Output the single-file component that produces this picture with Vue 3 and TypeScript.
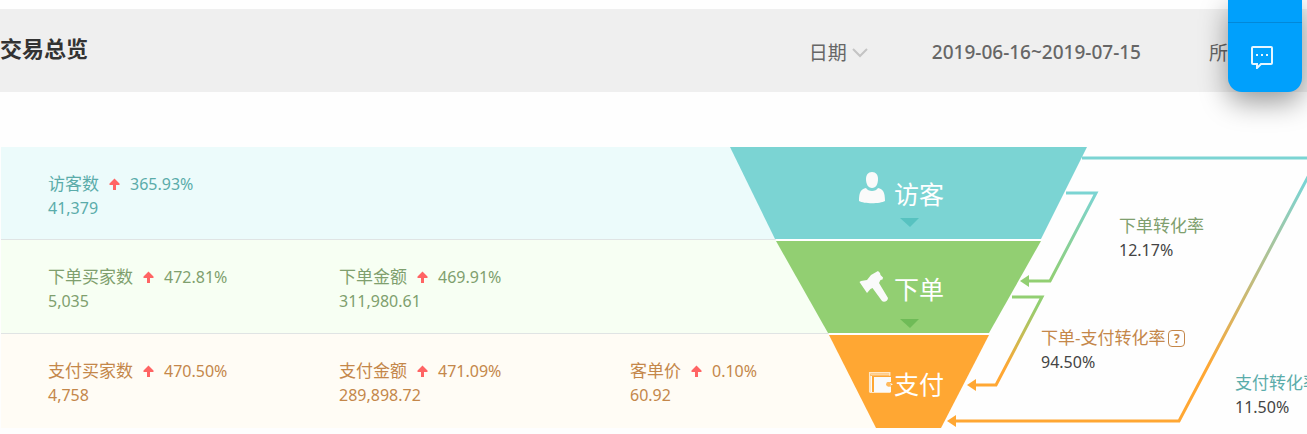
<script setup lang="ts">
interface Metric { name: string; change: string; value: string }
interface Stage { key: string; metrics: Metric[] }
interface Rate { key: string; name: string; value: string; help?: boolean }

const stages: Stage[] = [
  { key: 'visit', metrics: [{ name: '访客数', change: '365.93%', value: '41,379' }] },
  {
    key: 'order',
    metrics: [
      { name: '下单买家数', change: '472.81%', value: '5,035' },
      { name: '下单金额', change: '469.91%', value: '311,980.61' },
    ],
  },
  {
    key: 'pay',
    metrics: [
      { name: '支付买家数', change: '470.50%', value: '4,758' },
      { name: '支付金额', change: '471.09%', value: '289,898.72' },
      { name: '客单价', change: '0.10%', value: '60.92' },
    ],
  },
]

const rates: Rate[] = [
  { key: 'order', name: '下单转化率', value: '12.17%' },
  { key: 'order-pay', name: '下单-支付转化率', value: '94.50%', help: true },
  { key: 'pay', name: '支付转化率', value: '11.50%' },
]
</script>

<template>
  <main class="page">
    <header class="bar">
      <h1>交易总览</h1>
      <div class="filters">
        <button type="button" class="picker">
          日期
          <svg width="16" height="10" viewBox="0 0 16 10" aria-hidden="true">
            <path d="M1 1l7 7 7-7" fill="none" stroke="#c4c4c4" stroke-width="2" />
          </svg>
        </button>
        <span class="range">2019-06-16~2019-07-15</span>
        <button type="button" class="picker">所</button>
      </div>
    </header>

    <section class="overview">
      <div class="stages">
        <div v-for="s in stages" :key="s.key" class="stage" :class="s.key">
          <dl v-for="m in s.metrics" :key="m.name" class="metric">
            <dt>
              {{ m.name }}
              <svg width="11" height="12" viewBox="0 0 11 12" role="img" aria-label="上升">
                <path d="M5.500 .5L10.500 5.500V7H7v5H4V7H.5V5.500z" fill="#ff6464" />
              </svg>
              <span class="num">{{ m.change }}</span>
            </dt>
            <dd class="num">{{ m.value }}</dd>
          </dl>
        </div>
      </div>

      <div class="diagram">
        <svg class="funnel" width="600" height="281" viewBox="0 0 600 281">
          <defs>
            <linearGradient id="g1" gradientUnits="userSpaceOnUse" x1="0" y1="46" x2="0" y2="134">
              <stop offset="0" stop-color="#7bd4d3" /><stop offset="1" stop-color="#92cf72" />
            </linearGradient>
            <linearGradient id="g2" gradientUnits="userSpaceOnUse" x1="0" y1="150" x2="0" y2="238">
              <stop offset="0.1" stop-color="#92cf72" /><stop offset="0.8" stop-color="#ffa733" />
            </linearGradient>
            <linearGradient id="g3" gradientUnits="userSpaceOnUse" x1="0" y1="11" x2="0" y2="274">
              <stop offset="0.1" stop-color="#7bd4d3" /><stop offset="0.8" stop-color="#ffa733" />
            </linearGradient>
          </defs>
          <path d="M45 91h267l-1 4H47zM98 185h162l-1 4H100z" fill="#fff" />
          <path d="M0 0H357L311 92H45z" fill="#7bd4d3" />
          <path d="M46 94H311L259 186H98z" fill="#92cf72" />
          <path d="M99 188H259L211 281H146z" fill="#ffa733" />
          <path d="M170 71h19l-9 9z" fill="#57c2c0" />
          <path d="M170 172h19l-9 9z" fill="#6fbb57" />

          <g fill="none" stroke-width="3">
            <path d="M336 46H366L320 134H298" stroke="url(#g1)" />
            <path d="M282 150H312L266 238H245" stroke="url(#g2)" />
            <path d="M352 11H588L449 274H224" stroke="url(#g3)" />
          </g>
          <path d="M290 134l9-6v12z" fill="#92cf72" />
          <path d="M237 238l9-6v12z" fill="#ffa733" />
          <path d="M217 274l9-6v12z" fill="#ffa733" />

          <g fill="#fafafa">
            <path d="M142 25c4 0 6 3 6 7 0 5-2 9-6 9s-6-4-6-9c0-4 2-7 6-7z" />
            <path d="M136 41c2 4 10 4 12 0 5 1 7 4 7 13-5 3-21 3-26 0 0-9 2-12 7-13z" />
            <path d="M129.500 135L131 134l6-1 4-5 7-4 2 2 .5 2 2.500 2.500-.5 2-2 .5-1.500 3 9 15c0 3-4 5-6 3L142.500 141l-2 1-3.500 4z" />
            <path d="M144 230h17v5h-2a2.300 2.300 0 0 0 0 4.600h2V245h-17z" />
            <path d="M159 235.500l4 1.800-4 2z" />
          </g>
          <path d="M139.700 245V225.700h20v3" fill="none" stroke="#ffe6c4" stroke-width="1.500" />
          <path d="M139.500 245.500h21" stroke="#ffe6c4" />
          <path d="M141 227.500h18" stroke="#ffd39a" stroke-width="2" />
          <path d="M141.200 229v16" stroke="#fafafa" stroke-width="1.600" />
          <circle cx="158.400" cy="237.300" r="2.300" fill="#ffb95c" />
          <g class="names">
            <text x="164" y="57">访客</text>
            <text x="164" y="152">下单</text>
            <text x="164" y="247">支付</text>
          </g>
        </svg>

        <dl v-for="r in rates" :key="r.key" class="rate" :class="r.key">
          <dt>{{ r.name }}<button v-if="r.help" type="button" class="help" aria-label="说明">?</button></dt>
          <dd class="num">{{ r.value }}</dd>
        </dl>
      </div>
    </section>

    <aside class="dock">
      <button type="button" class="dock-item" aria-label="更多"></button>
      <button type="button" class="dock-item chat" aria-label="客服">
        <svg width="24" height="24" viewBox="0 0 24 24" aria-hidden="true">
          <path d="M3 2h18q1 0 1 1v15q0 1-1 1H11l-4 4v-4H3q-1 0-1-1V3q0-1 1-1z" fill="none" stroke="#e6f6ff" stroke-width="2" />
          <path d="M6 9h2v2H6zM11 9h2v2h-2zM16 9h2v2h-2z" fill="#e6f6ff" />
        </svg>
      </button>
    </aside>
  </main>
</template>

<style>
body { margin: 0; background: #fefefe; }
</style>

<style scoped>
.page {
  position: relative;
  overflow: hidden;
  padding: 9px 0 6px;
  font-family: "Noto Sans", "Noto Sans CJK SC", sans-serif;
  font-size: 17px;
  line-height: 24px;
}
button { font: inherit; color: inherit; background: none; border: 0; padding: 0; }
dl, dd, h1 { margin: 0; }
.bar {
  display: flex;
  justify-content: space-between;
  align-items: center;
  height: 83px;
  background: #efefef;
  color: #666;
}
h1 { font-size: 22px; line-height: 32px; color: #333; font-weight: 700; padding-bottom: 5px; }
.filters { display: flex; align-items: center; font-size: 19px; padding-right: 79px; }
.picker { display: flex; align-items: center; gap: 5px; padding-top: 4px; }
.range { margin: 0 68px 0 64px; font-weight: 500; padding-top: 2px; }
.overview {
  display: grid;
  grid-template-columns: minmax(0, 1fr) 577px;
  margin-top: 55px;
}
.stages { margin: 0 -146px 0 1px; }
.stage {
  display: grid;
  grid-template-columns: repeat(3, 291px);
  box-sizing: border-box;
  height: 94px;
  padding: 25px 0 0 47px;
  border-bottom: 1px solid #e0e4e4;
}
.stage.visit { height: 93px; background: #ecfbfb; color: #5aacaa; }
.stage.order { background: #f7fff3; color: #7f9f6e; }
.stage.pay { background: #fffcf5; color: #c4874a; border-bottom: 0; }
.metric dt { display: flex; align-items: center; gap: 10px; white-space: nowrap; }
.num { font-size: 16px; }
.diagram { position: relative; }
.funnel { display: block; position: absolute; top: 0; left: 0; }
.names { fill: #fff; font-size: 25px; }
.rate { position: absolute; white-space: nowrap; }
.rate dt { display: flex; align-items: center; gap: 3px; }
.rate dd { color: #444; }
.rate.order { left: 389px; top: 67px; color: #7f9f6e; }
.rate.order-pay { left: 311px; top: 179px; color: #c4874a; }
.rate.pay { left: 505px; top: 224px; color: #5aacaa; }
.help {
  box-sizing: border-box;
  width: 17px;
  height: 17px;
  border: 1px solid #c4874a;
  border-radius: 4px;
  font-size: 12px;
  font-weight: 700;
  line-height: 15px;
}
.dock {
  position: absolute;
  top: 0;
  right: 5px;
  width: 74px;
  border-radius: 0 0 14px 14px;
  background: #00a0fc;
  box-shadow: 0 10px 28px rgba(0, 0, 0, 0.4);
}
.dock-item { display: flex; box-sizing: border-box; width: 100%; height: 22px; justify-content: center; align-items: center; }
.dock-item.chat { height: 70px; border-top: 1px solid #0288d8; padding: 0 6px 2px 0; }
</style>
